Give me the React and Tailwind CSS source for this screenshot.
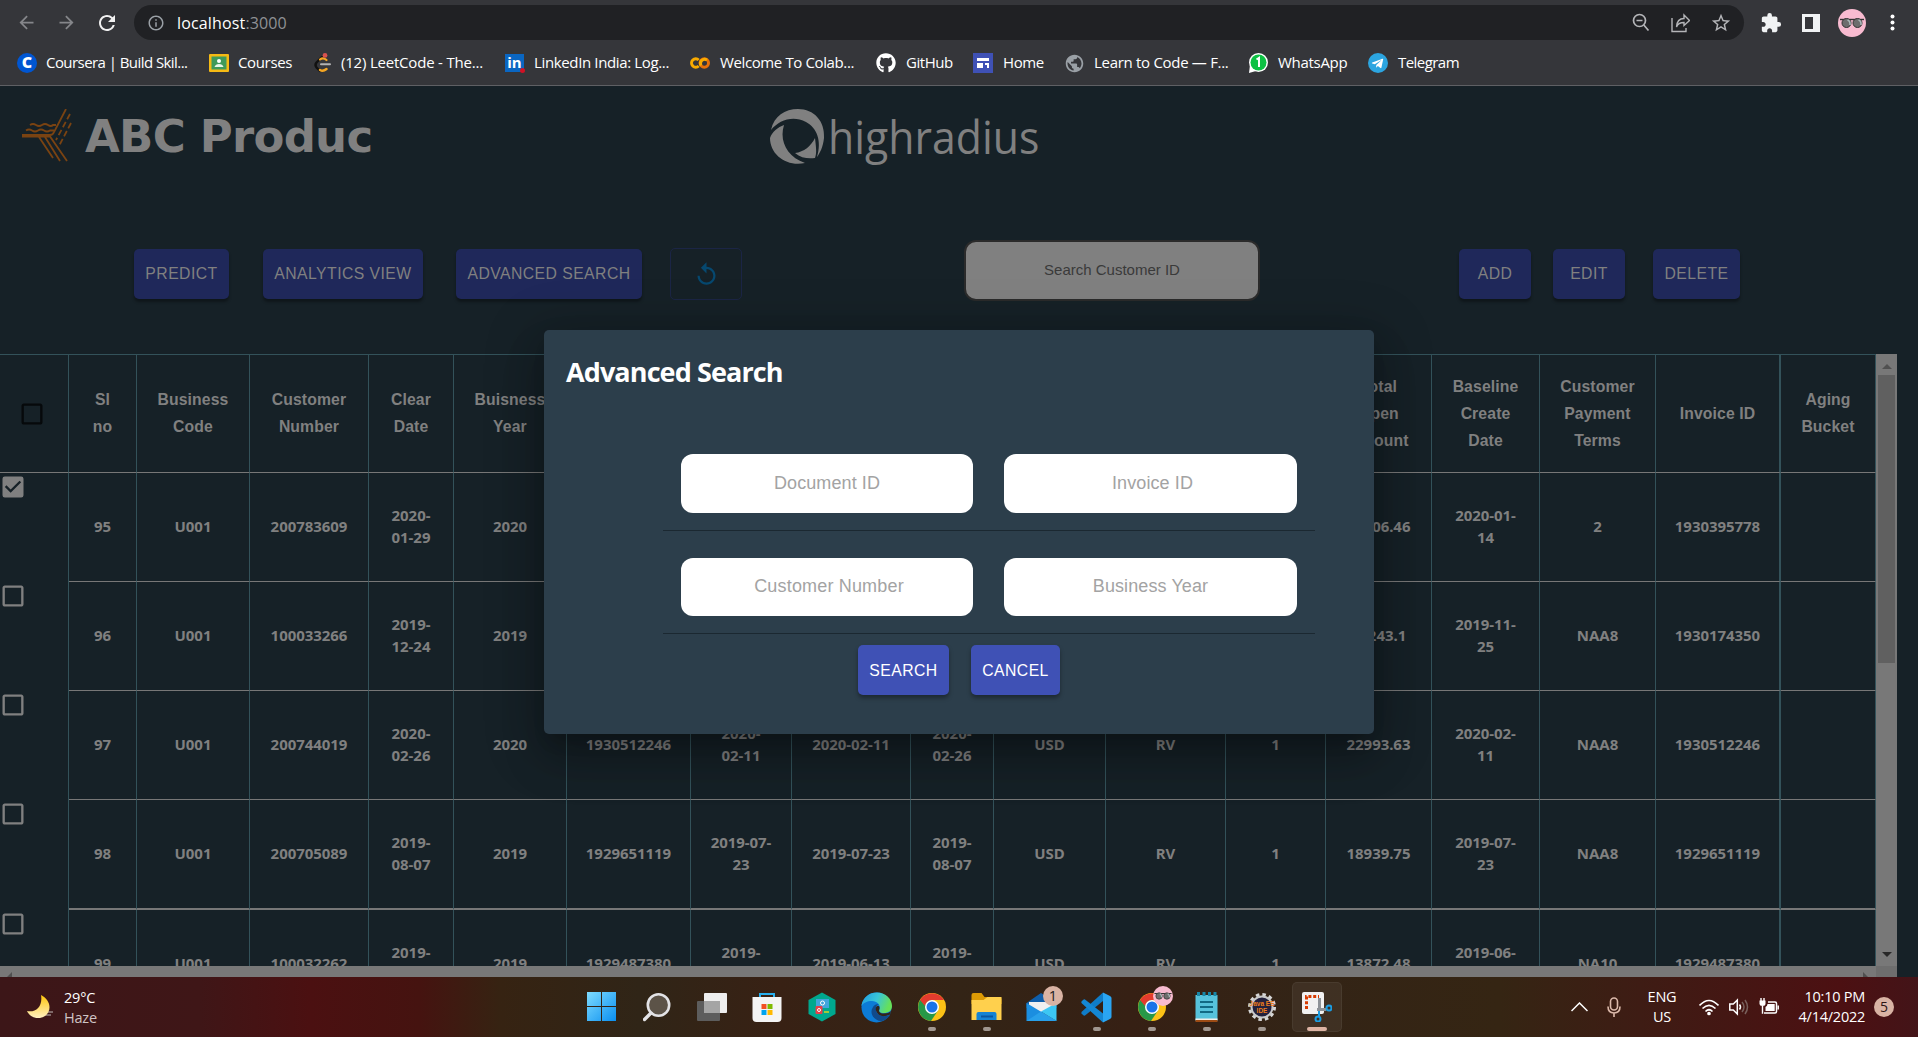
import React from "react";
import { FaGithub, FaTelegramPlane } from "react-icons/fa";
import { MdExtension, MdCheckBox, MdCheckBoxOutlineBlank, MdReplay, MdStarBorder, MdArrowBack, MdArrowForward, MdRefresh, MdOutlineInfo, MdPublic } from "react-icons/md";

const ui = "font-['Open_Sans','Noto_Sans',sans-serif]";
const arial = "font-['Liberation_Sans',Arial,sans-serif]";

/* ---------- browser bar ---------- */

const LeetCode = () => (
  <svg width="20" height="20" viewBox="0 0 20 20" fill="none" strokeLinecap="round">
    <path d="M10 4 L4.5 9.5 Q2.5 12 4.5 14.5 L8 18" stroke="#111" strokeWidth="2.4" />
    <path d="M8 6.5 Q11 4 14.5 7" stroke="#f5a623" strokeWidth="2.2" />
    <path d="M8 17 Q11 19 14.5 16" stroke="#f5a623" strokeWidth="2.4" />
    <path d="M9 11.2 H18" stroke="#b3b3b3" strokeWidth="2" />
    <circle cx="13" cy="2.4" r="2.4" fill="#d9534f" />
  </svg>
);
const Avatar = ({ className }) => (
  <svg className={className} viewBox="0 0 28 28">
    <circle cx="14" cy="14" r="14" fill="#f8bbd0" />
    <path d="M2 10.500 H26" stroke="#333" strokeWidth="1.4" />
    <circle cx="8.5" cy="14" r="4.5" fill="#6d6d6d" stroke="#333" />
    <circle cx="19.5" cy="14" r="4.5" fill="#6d6d6d" stroke="#333" />
    <path d="M9.500 11 q3 1 2.500 5 M20.500 11 q3 1 2.500 5" fill="none" stroke="#a9b8b8" strokeWidth="1.6" />
  </svg>
);

const bookmarks = [
  ["Coursera | Build Skil...", "tracking-[-0.56px]", <div className="w-5 h-5 rounded-full bg-[#0056d2] text-white text-[16px] leading-[19px] font-extrabold text-center">C</div>],
  ["Courses", "tracking-[-0.35px]", <svg width="20" height="18" viewBox="0 0 20 18"><rect width="20" height="18" rx="1" fill="#f5ba14" /><rect x="2.5" y="2.5" width="15" height="13" fill="#3f9a5a" /><circle cx="10" cy="7" r="2" fill="#fff" /><path d="M5.5 13 q1-3 4.500-3 t4.500 3z" fill="#e8f5e9" /></svg>],
  ["(12) LeetCode - The...", "tracking-[-0.2px]", <LeetCode />],
  ["LinkedIn India: Log...", "tracking-[-0.36px]", <div className="relative w-[19px] h-[18px] bg-[#0a66c2] text-white text-[15px] leading-[16px] font-bold text-center">in<span className="absolute -right-px -bottom-px w-[5px] h-[5px] rounded-full bg-[#d11124]" /></div>],
  ["Welcome To Colab...", "ml-px tracking-[-0.38px]", <svg width="20" height="20" viewBox="0 0 20 20" fill="none" strokeWidth="3"><circle cx="14.300" cy="10" r="4.200" stroke="#e8710a" /><path d="M8.700 7 A4.200 4.200 0 1 0 8.700 13" stroke="#f9ab00" /><path d="M11 12.500 A4.200 4.200 0 0 1 17 7" stroke="#f9ab00" /></svg>],
  ["GitHub", "ml-px tracking-[-0.45px]", <FaGithub size={20} color="#fff" />],
  ["Home", "ml-px tracking-[-0.4px]", <svg width="20" height="20" viewBox="0 0 20 20"><rect width="20" height="20" fill="#3f51b5" /><path d="M4 5h12v3H4zM4 10h6v5H4zM12 10h4v5h-2v-3h-2z" fill="#fff" /></svg>],
  ["Learn to Code — F...", "ml-px tracking-[-0.3px]", <MdPublic size={21} color="#9aa0a6" />],
  ["WhatsApp", "ml-px tracking-[-0.3px]", <svg width="20" height="20" viewBox="0 0 20 20"><circle cx="10.500" cy="9.500" r="9.500" fill="#fff" /><path d="M1 20 L2 12 L8 18z" fill="#fff" /><circle cx="10.500" cy="9.500" r="8" fill="#0dc143" /><path d="M8.500 6.500 L11 4.800 V14" fill="none" stroke="#fff" strokeWidth="2" /></svg>],
  ["Telegram", "ml-px tracking-[-0.55px]", <div className="w-5 h-5 rounded-full bg-[#2ca5e0] flex items-center justify-center"><FaTelegramPlane size={13} color="#fff" className="mr-0.5" /></div>],
];
const bookmarkWidths = ["w-[192px]", "w-[103px]", "w-[193px]", "w-[185px]", "w-[186px]", "w-[97px]", "w-[91px]", "w-[184px]", "w-[120px]", "w-[120px]"];

function Browser() {
  return (
    <div className={`${ui} h-[86px] bg-[#35363a] border-b border-[#5f6064] text-white`}>
      <div className="h-[42px] pt-[3px] flex items-center">
        <div className="flex w-[134px] pl-4 gap-[19px] items-center h-[34px] text-[#85868a]">
          <MdArrowBack size={21} /><MdArrowForward size={21} /><MdRefresh size={24} color="#f1f1f1" className="-ml-px" />
        </div>
        <div className="h-[35px] w-[1610px] rounded-full bg-[#202124] flex items-center pl-[13px] pr-3 text-[16px]">
          <MdOutlineInfo size={18} color="#9aa0a6" />
          <span className="ml-3 tracking-[0.15px]">localhost<span className="text-[#8f9195]">:3000</span></span>
          <div className="ml-auto flex items-center gap-[20px] text-[#b4b5b8]">
            <svg width="20" height="20" viewBox="0 0 20 20" fill="none" stroke="currentColor" strokeWidth="1.7"><circle cx="9.500" cy="7.500" r="6" /><path d="M6.500 7.500h6M13.800 12 L18.500 17.500" /></svg>
            <svg width="20" height="20" viewBox="0 0 20 20" fill="none" stroke="currentColor" strokeWidth="1.400"><path d="M2 5V18.500H16V15M14 2 L19.500 7.500 L14 12.500 V9.500 Q8 9.500 6.500 14 Q7 5.500 14 5.500z" /></svg>
            <MdStarBorder size={22} />
          </div>
        </div>
        <div className="ml-[16px] flex items-center">
          <MdExtension size={22} color="#f1f3f4" />
          <span className="ml-[20px] w-[18px] h-[18px] border-[3px] border-r-[7px] border-[#f1f3f4]" />
          <Avatar className="ml-[18px] w-7 h-7" />
          <svg className="ml-[24px]" width="5" height="18" fill="#fff"><circle cx="2.500" cy="2.500" r="2" /><circle cx="2.500" cy="8.500" r="2" /><circle cx="2.500" cy="14.500" r="2" /></svg>
        </div>
      </div>
      <div className="flex h-[42px] items-center pl-[17px] text-[15px]">
        {bookmarks.map((b, i) => (
          <div key={b[0]} className={`flex shrink-0 items-center ${bookmarkWidths[i]}`}>
            <div className="w-[29px] shrink-0 flex">{b[2]}</div>
            <span className={`whitespace-nowrap -mt-0.5 ${b[1]}`}>{b[0]}</span>
          </div>
        ))}
      </div>
    </div>
  );
}

/* ---------- application ---------- */

function Logos() {
  return (
    <div className="flex h-[155px] pt-[23px] pl-[22px]">
      <svg width="50" height="53" viewBox="0 0 50 53" fill="none" stroke="#7a4312" strokeWidth="1.800">
        <path d="M44 0 L32 23 Q31 26 28 26 H0 M0 27.500 H28 L45 52 M17 28 L31 49 M23 28 L38 52" />
        <path d="M8 16 q3-2 6 0 t6 0 t6 0 t5 0 l3 0 M4 21.500 q3-2 6 0 t6 0 t6 0 t6 0 l4 0" />
        <path d="M48 5 L34 31 M49 14 L37 37" strokeDasharray="6 3" />
      </svg>
      <div className="ml-[13px] mt-[1px] w-[290px] whitespace-nowrap font-['DejaVu_Sans',sans-serif] font-bold text-[45px] leading-[53px] tracking-[-0.75px] text-[#808080]">ABC Produc</div>
      <svg className="ml-[395px] shrink-0" width="55" height="55" viewBox="0 0 55 55" fill="#808080">
        <path d="M1 21 C4 7 15 0 28 0 C44 0 55 12 54 29 C53 38 50 44 47 48 C52 32 47 19 36 13 C23 6 9 11 1 21z" />
        <path d="M14 16 C9 32 17 48 35 54 C17 58 0 46 0 29 C2 23 8 18 14 16z" />
        <path d="M45 29 C46 38 47 44 45 49 C38 50 31 49 25 44 C34 43 41 37 45 29z" />
      </svg>
      <div className="ml-[3px] mt-[1px] whitespace-nowrap font-['Open_Sans',sans-serif] text-[46px] leading-[53px] text-[#808080] origin-left scale-x-[0.93]">highradius</div>
    </div>
  );
}

const btn = "h-[50px] shrink-0 rounded-[5px] text-[15.75px] tracking-[0.45px] whitespace-nowrap flex items-center justify-center";
const dim = `${btn} bg-[#1f285a] text-[#808080] shadow-[0_3px_3px_rgba(0,0,0,0.35)]`;

function Toolbar() {
  return (
    <div className={`${arial} flex items-center h-[66px] pl-[134px]`}>
      <div className={`${dim} w-[95px]`}>PREDICT</div>
      <div className={`${dim} w-[160px] ml-[34px]`}>ANALYTICS VIEW</div>
      <div className={`${dim} w-[186px] ml-[33px]`}>ADVANCED SEARCH</div>
      <div className="ml-[28px] w-[72px] h-[52px] shrink-0 rounded-[5px] border border-[#1b2545] flex items-center justify-center">
        <MdReplay size={27} color="#06486f" />
      </div>
      <div className="ml-[222px] w-[296px] h-[61px] shrink-0 -mt-[7px] rounded-[12px] border-2 border-[#2b2b2b] bg-[#808080] text-[#3a3a3a] text-[15px] flex items-center justify-center">Search Customer ID</div>
      <div className={`${dim} w-[72px] ml-[199px]`}>ADD</div>
      <div className={`${dim} w-[72px] ml-[22px]`}>EDIT</div>
      <div className={`${dim} w-[87px] ml-[28px]`}>DELETE</div>
    </div>
  );
}

const cols = "grid grid-cols-[69px_68px_113px_119px_85px_113px_124px_101px_119px_83px_112px_120px_100px_106px_108px_116px_125px_95px]";
const headers = ["Sl\nno", "Business\nCode", "Customer\nNumber", "Clear\nDate", "Buisness\nYear", "", "", "", "", "", "", "", "Total\nOpen\nAmount", "Baseline\nCreate\nDate", "Customer\nPayment\nTerms", "Invoice ID", "Aging\nBucket"];
const rows = [
  ["95", "U001", "200783609", "2020-\n01-29", "2020", "", "", "", "", "", "", "", "12306.46", "2020-01-\n14", "2", "1930395778", ""],
  ["96", "U001", "100033266", "2019-\n12-24", "2019", "", "", "", "", "", "", "", "13243.1", "2019-11-\n25", "NAA8", "1930174350", ""],
  ["97", "U001", "200744019", "2020-\n02-26", "2020", "1930512246", "2020-\n02-11", "2020-02-11", "2020-\n02-26", "USD", "RV", "1", "22993.63", "2020-02-\n11", "NAA8", "1930512246", ""],
  ["98", "U001", "200705089", "2019-\n08-07", "2019", "1929651119", "2019-07-\n23", "2019-07-23", "2019-\n08-07", "USD", "RV", "1", "18939.75", "2019-07-\n23", "NAA8", "1929651119", ""],
  ["99", "U001", "100032262", "2019-\n12-25", "2019", "1929487380", "2019-\n06-13", "2019-06-13", "2019-\n06-28", "USD", "RV", "1", "13872.48", "2019-06-\n13", "NA10", "1929487380", ""],
];

function Cell({ children, className, wide }) {
  return (
    <div className={`${className} flex items-center justify-center text-center whitespace-pre-line border-[#33525a] ${wide ? "border-r-2" : "border-r"}`}>
      <span>{children}</span>
    </div>
  );
}

function Table() {
  return (
    <div className="flex h-[612px] overflow-hidden mt-[47px]">
      <div className="w-[1876px] h-[612px] overflow-hidden text-[#808080]">
        <div className={`${cols} ${arial} h-[119px] border-t border-t-[#33525a] font-bold text-[15.75px] leading-[27px] tracking-[0.12px]`}>
          <div className="border-r border-r-[#33525a] border-b border-b-[#777777] pl-[18px] pt-px flex items-center"><MdCheckBoxOutlineBlank size={28} color="#06090b" /></div>
          {headers.map((h, i) => <Cell key={i} wide={i === 15} className={h.split("\n").length === 2 ? "border-b border-b-[#777777] pb-[2px]" : "border-b border-b-[#777777]"}>{h}</Cell>)}
        </div>
        {rows.map((r, n) => (
          <div key={n} className={`${cols} font-['Noto_Sans',sans-serif] ${n === 3 ? "h-[110px]" : "h-[109px]"} font-bold text-[15px] leading-[22px] tracking-[-0.05px]`}>
            <div className="border-r border-r-[#33525a]">
              {n === 0 ? <MdCheckBox size={28} className="-ml-px" /> : <MdCheckBoxOutlineBlank size={28} className="-ml-px" />}
            </div>
            {r.map((v, i) => <Cell key={i} wide={i === 15} className={n === 3 ? "pb-[3px] border-b-2 border-b-[#777777]" : "pb-[3px] border-b border-b-[#777777]"}>{v}</Cell>)}
          </div>
        ))}
      </div>
      <div className="w-[21px] h-[612px] bg-[#787878] flex flex-col items-center">
        <div className="h-[21px] flex items-center"><span className="border-x-[5px] border-x-transparent border-b-[5px] border-b-[#505050] mt-1" /></div>
        <div className="w-[17px] h-[288px] bg-[#606060]" />
        <div className="mt-auto h-[21px]"><span className="block mt-[7px] border-x-[5px] border-x-transparent border-t-[5px] border-t-[#282828]" /></div>
      </div>
    </div>
  );
}

const field = "rounded-[12px] bg-white text-[#a3a3a3] text-[18px] flex items-center justify-center";

function FieldRow({ left, right, height, leftText, rightText }) {
  return (
    <div>
      <div className="flex gap-[31px] pl-[18px]">
        <div className={`${field} w-[292px] ${height}`}><span className={leftText}>{left}</span></div>
        <div className={`${field} w-[293px] ${height}`}><span className={rightText}>{right}</span></div>
      </div>
      <div className="mt-[17px] h-px bg-[#1b2831]" />
    </div>
  );
}

function Modal() {
  return (
    <div className="absolute left-[544px] top-[330px] w-[830px] h-[404px] rounded-[5px] bg-[#2c3e4b] shadow-[0_12px_17px_-8px_rgba(0,0,0,0.2),0_27px_43px_3px_rgba(0,0,0,0.14),0_10px_52px_9px_rgba(0,0,0,0.22)]">
      <h2 className={`${ui} pl-[22px] pt-[24px] h-[124px] text-[27px] leading-[36px] font-bold text-white tracking-[-0.9px]`}>Advanced Search</h2>
      <div className={`${arial} ml-[119px] w-[652px]`}>
        <FieldRow left="Document ID" right="Invoice ID" height="h-[59px]" leftText="tracking-[0.1px]" rightText="ml-1 tracking-[0.1px]" />
        <div className="h-[27px]" />
        <FieldRow left="Customer Number" right="Business Year" height="h-[58px]" leftText="-mt-0.5 ml-[4px] tracking-[0.17px]" rightText="-mt-0.5 tracking-[0.1px]" />
      </div>
      <div className={`${arial} flex justify-center gap-[22px] mt-[11px] text-white`}>
        <div className={`${btn} w-[91px] pt-px bg-[#3f51b5] shadow-[0_3px_4px_rgba(0,0,0,0.35)]`}>SEARCH</div>
        <div className={`${btn} w-[89px] pt-px bg-[#3f51b5] shadow-[0_3px_4px_rgba(0,0,0,0.35)]`}>CANCEL</div>
      </div>
    </div>
  );
}

/* ---------- taskbar ---------- */

const Chrome = () => (
  <svg width="28" height="28" viewBox="0 0 28 28">
    <circle cx="14" cy="14" r="14" fill="#fbc116" />
    <path d="M2 7 A14 14 0 0 0 13 28 L20 17.500 L14 14z" fill="#279847" />
    <path d="M2 7 L8 17.500 L14 14 L14 7z" fill="#279847" />
    <path d="M2 7 A14 14 0 0 1 26.100 7 H14 A7 7 0 0 0 8 10.500 L7 13z" fill="#e33b2e" />
    <circle cx="14" cy="14" r="7" fill="#fff" /><circle cx="14" cy="14" r="5.500" fill="#1a73e8" />
  </svg>
);
const apps = [
  <svg width="30" height="30" viewBox="0 0 30 30"><defs><linearGradient id="win" x1="0" y1="0" x2="1" y2="1"><stop stopColor="#7fdcff" /><stop offset="1" stopColor="#0a8ff0" /></linearGradient></defs><path d="M0 0h14v14H0zM15 0h14v14H15zM0 15h14v14H0zM15 15h14v14H15z" fill="url(#win)" /></svg>,
  <svg width="28" height="29" viewBox="0 0 28 29" fill="none" stroke="#e3e3e6"><circle cx="15.500" cy="12" r="10.700" strokeWidth="2.600" fill="#5c5348" /><path d="M8 20 L1.500 26.500" strokeWidth="3.400" strokeLinecap="round" /></svg>,
  <svg width="30" height="28" viewBox="0 0 30 28"><rect y="8" width="23" height="20" rx="1" fill="#5d5d5d" /><rect x="7" width="23" height="20" rx="1" fill="#eeeeee" /><rect x="7" y="8" width="16" height="12" fill="#a5a5a5" /></svg>,
  <svg width="30" height="29" viewBox="0 0 30 29"><path d="M8 6V1h14v5" fill="none" stroke="#29b0ee" strokeWidth="2" /><path d="M0.500 4h29v21q0 4-4 4h-21q-4 0-4-4z" fill="#f4f4f4" /><path d="M9.500 11h5v5h-5z" fill="#f25022" /><path d="M15.500 11h5v5h-5z" fill="#7fba00" /><path d="M9.500 17h5v5h-5z" fill="#00a4ef" /><path d="M15.500 17h5v5h-5z" fill="#ffb900" /></svg>,
  <svg width="28" height="30" viewBox="0 0 28 30"><path d="M14 0.500 L27.500 8v14L14 29.500 0.500 22V8z" fill="#00a88e" /><rect x="8" y="7" width="13" height="9" fill="#42a5dc" /><circle cx="14.500" cy="11" r="2" fill="none" stroke="#fff" /><rect x="7.500" y="14" width="7" height="8" rx="1" fill="#e5404a" /><circle cx="11" cy="18" r="1.500" fill="none" stroke="#fff" /><rect x="16" y="19" width="5" height="2" fill="#9ccc3c" /></svg>,
  <svg width="31" height="31" viewBox="0 0 31 31"><defs><linearGradient id="edge" x1="0" y1="0" x2="1" y2="0.300"><stop stopColor="#1f9be3" /><stop offset="0.550" stopColor="#39c5d8" /><stop offset="1" stopColor="#66e05a" /></linearGradient></defs><circle cx="15.500" cy="15.500" r="15" fill="#0c7bd6" /><path d="M0.500 13 C2 5 9 0.500 16 0.500 C25 0.500 31 7 31 14 C31 19 27 21 23 21 C19 21 17.500 19.500 18.500 17.500 C20 13 16 9 11 9 C6 9 2 11 0.500 14z" fill="url(#edge)" /><path d="M11.500 16 C8 22 14 29.500 21 29 C25 28 28 25 29.500 22.500 C22 26.500 14.500 23 15 17 Q15 13 18 12 Q13 12 11.500 16z" fill="#114a8b" /><path d="M15 15.500 Q16.500 12.500 18.300 14.500 Q19 16 18 18.500 Q18 21 22 21.500 Q28 21.500 30 19 L29 22.500 Q22 26 17.500 22.500 Q14 19 15 15.500z" fill="#33241a" /></svg>,
  <Chrome />,
  <svg width="31" height="28" viewBox="0 0 31 28"><path d="M0.500 2q0-2 2-2h8l3 4h15q2 0 2 2v5H0.500z" fill="#dc9a05" /><path d="M0.500 7h12l4-3h14v23H0.500z" fill="#ffd04d" /><path d="M5.500 21q0-2 2-2h16q2 0 2 2v6h-20z" fill="#1583d3" /><path d="M10 23.500h12" stroke="#0a56a0" strokeWidth="2" /></svg>,
  <svg width="31" height="28" viewBox="0 0 31 28"><path d="M0.500 10 L15 0 L30.500 10 V15H0.500z" fill="#0f5eaa" /><path d="M3 9h25v10H3z" fill="#f0f0f0" /><path d="M0.500 10 L30.500 28H0.500z" fill="#1b8ee0" /><path d="M30.500 10 V28 L15 18.500z" fill="#3cc7f4" /><path d="M0.500 28 L15 18.500 L30.500 28z" fill="#28a0ea" /></svg>,
  <svg width="31" height="31" viewBox="0 0 31 31"><path d="M22 0.500 V9 L4 23.500 Q3 24 2 23 L0.500 21.500 Q0 20.500 1 19.500z" fill="#0f7cc8" /><path d="M22 30.500 V21.500 L4 7.500 Q3 7 2 8 L0.500 9.500 Q0 10.500 1 11.500z" fill="#1487d4" /><path d="M22 0.500 L29 4 Q30.500 5 30.500 6 V25 Q30.500 26 29 27 L22 30.500z" fill="#2aa5f2" /></svg>,
  <Chrome />,
  <svg width="23" height="30" viewBox="0 0 23 30"><rect x="0.500" y="3" width="22" height="26" fill="#56c2db" /><path d="M0.500 26.500h22v1.500h-22z" fill="#f3efe8" /><path d="M0.500 28h22v2h-22z" fill="#9c4b14" /><path d="M5 10h13M5 15h13M5 20h13" stroke="#126a84" strokeWidth="2" /><path d="M3.500 0v4M9 0v4M14.500 0v4M20 0v4" stroke="#1787a8" strokeWidth="3" /></svg>,
  <svg width="30" height="30" viewBox="0 0 30 30"><circle cx="15" cy="15" r="12.500" fill="none" stroke="#d6d6d6" strokeWidth="3" strokeDasharray="3.500 3.045" /><circle cx="15" cy="15" r="10.500" fill="#23203c" stroke="#c9c9c9" strokeWidth="2" /><text x="15" y="14" textAnchor="middle" fontSize="6.500" fontWeight="bold" fontFamily="Liberation Sans" fill="#ee7d1b">Java EE</text><text x="15" y="20.500" textAnchor="middle" fontSize="6.500" fontWeight="bold" fontFamily="Liberation Sans" fill="#ee7d1b">IDE</text></svg>,
  <svg width="30" height="30" viewBox="0 0 30 30"><rect width="22" height="22" rx="2" fill="#f1f1f1" /><path d="M4.500 17V4.500H17" fill="none" stroke="#d83b01" strokeWidth="3" strokeDasharray="3 1.800" /><path d="M17.500 6V18M15 17.500 H24" stroke="#8d9297" strokeWidth="3" /><path d="M17 19v5" stroke="#1b9de2" strokeWidth="2" /><circle cx="27" cy="16" r="2.500" fill="none" stroke="#1b9de2" strokeWidth="2" /><circle cx="16" cy="27" r="2.500" fill="none" stroke="#1b9de2" strokeWidth="2" /></svg>,
];

function Taskbar() {
  return (
    <div className={`${ui} h-[60px] text-white text-[14.5px] leading-[20px] flex items-center bg-[linear-gradient(90deg,#3c1618_0px,#3f1617_200px,#4b1011_310px,#451310_420px,#362312_500px,#302517_640px,#382114_780px,#332416_960px,#362014_1130px,#332416_1300px,#352513_1500px,#3e1c14_1640px,#4c1012_1840px,#431418_1918px)]`}>
      <svg className="ml-[26px]" width="28" height="26" viewBox="0 0 28 26"><defs><linearGradient id="moon" x1="0" y1="0" x2="0" y2="1"><stop stopColor="#ffc60a" /><stop offset="1" stopColor="#fff0c0" /></linearGradient></defs><path d="M12 18h15M15 21h10" stroke="#9b8b8b" strokeWidth="2" opacity="0.700" /><path d="M15 1 C25 6 26 17 19 22 C13 26 4 24 1 17 C10 19 17 12 15 1z" fill="url(#moon)" /></svg>
      <div className="ml-[10px] w-[510px] mt-px tracking-[-0.2px]"><div>29°C</div><div className="text-[#cfc4c4]">Haze</div></div>
      <div className="flex w-[770px]">
        {apps.map((a, i) => (
          <div key={i} className="relative h-[60px] w-[55px] flex justify-center">
            {i === 13 && <span className="absolute left-[3px] top-[5px] w-[50px] h-[50px] rounded-[5px] bg-white/6 border border-white/5" />}
            <div className="relative h-[60px] flex items-center">{a}</div>
            {[6, 7, 9, 10, 11, 12].includes(i) && <span className="absolute bottom-1.5 w-2 h-1 rounded-full bg-[#a09790]" />}
            {i === 13 && <span className="absolute bottom-1.5 w-5 h-1 rounded-full bg-[#deb4a4]" />}
            {i === 8 && <span className="absolute left-[29px] top-[9px] w-5 h-5 rounded-full bg-[#d9b3a4] text-[#1c1c1c] text-center">1</span>}
            {i === 10 && <Avatar className="absolute left-[29px] top-[9px] w-5 h-5" />}
          </div>
        ))}
      </div>
      <svg className="ml-[227px]" width="17" height="10" fill="none" stroke="#fff" strokeWidth="1.500"><path d="M0.500 9 L8.500 1 L16.500 9" /></svg>
      <svg className="ml-[19px]" width="14" height="20" viewBox="0 0 14 20" fill="none" stroke="#dcb9aa" strokeWidth="1.600"><rect x="3.500" y="1" width="7" height="12" rx="3.500" /><path d="M1 9.500 Q1 16 7 16 T13 9.500 M7 16v4" /></svg>
      <div className="ml-[22px] w-[38px] text-center tracking-[-0.2px]">ENG<br />US</div>
      <svg className="ml-[18px]" width="20" height="17" viewBox="0 0 20 17" fill="none" stroke="#fff" strokeWidth="1.700"><path d="M0.500 6.500 Q10-3.500 19.500 6.500M3.500 9.500 Q10 3 16.500 9.500M6.500 12.500 Q10 9 13.500 12.500" /><circle cx="10" cy="14.500" r="1" fill="#fff" /></svg>
      <svg className="ml-[10px]" width="20" height="18" viewBox="0 0 20 18" fill="none" stroke="#fff" strokeWidth="1.500"><path d="M0.800 6h3.500l4-4v14l-4-4H0.800zM10.500 6.500q2 2.500 0 5" /><path d="M13 4q4 5 0 10M16 2q5 7 0 14" stroke="#79605c" /></svg>
      <svg className="ml-[10px]" width="20" height="18" viewBox="0 0 20 18" fill="none" stroke="#fff"><path d="M9 4h7q1.500 0 1.500 1.500v8q0 1.500-1.500 1.500H5" strokeWidth="1.500" /><path d="M8.500 6H15.700V13H6.500V9Q8.500 8 8.500 6z" fill="#fff" stroke="none" /><path d="M19.200 7.500v4" strokeWidth="1.500" /><path d="M0.500 2.500h6v3q0 2.500-3 2.500t-3-2.500z" fill="#fff" stroke="none" /><path d="M2 0v3M5 0v3M3.500 8v7.800" strokeWidth="1.400" /></svg>
      <div className="ml-[5px] w-[81px] text-right tracking-[-0.25px] whitespace-nowrap">10:10 PM<br />4/14/2022</div>
      <span className="ml-[9px] w-5 h-5 rounded-full bg-[#d9b3a4] text-[#2c1616] text-center text-[14px]">5</span>
    </div>
  );
}

export default function App() {
  return (
    <div className="relative w-[1918px] h-[1037px] overflow-hidden bg-[#162127]">
      <Browser />
      <div className="h-[891px] overflow-hidden">
        <Logos />
        <Toolbar />
        <Table />
        <div className="flex h-[11px] w-[1897px] bg-[#787878]">
          <span className="ml-[7px] mt-1.5 border-b-[5px] border-b-[#505050] border-l-[5px] border-l-transparent" />
          <span className="ml-auto mr-[29px] mt-1.5 border-b-[5px] border-b-[#505050] border-r-[5px] border-r-transparent" />
          <span className="-ml-[21px] w-[21px] bg-[#6e6e6e]" />
        </div>
      </div>
      <Modal />
      <Taskbar />
    </div>
  );
}
